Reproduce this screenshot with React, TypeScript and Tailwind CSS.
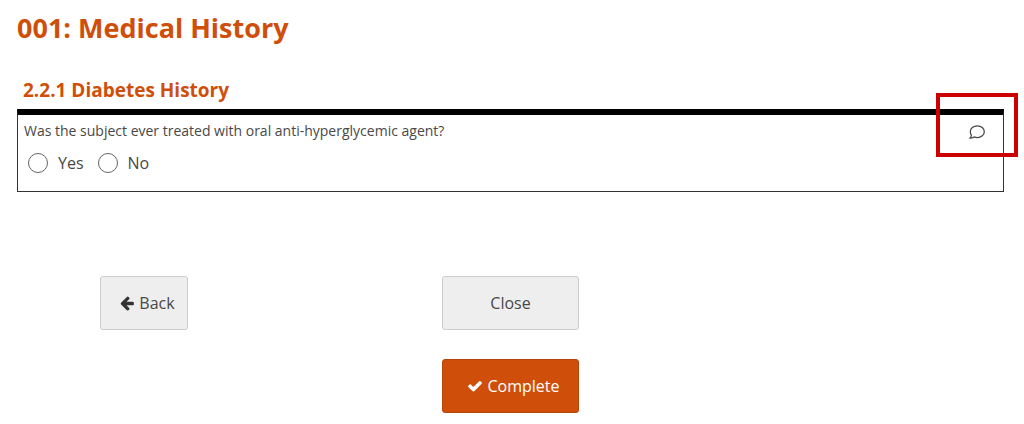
type IconProps = { className?: string };

const ArrowLeft = ({ className }: IconProps) => (
  <svg viewBox="0 0 1792 1792" fill="currentColor" className={className} aria-hidden="true">
    <path d="M1664 896v128q0 53-32.5 90.5t-84.5 37.5h-704l293 294q38 36 38 90t-38 90l-75 76q-37 37-90 37-52 0-91-37l-651-652q-37-37-37-90 0-52 37-91l651-650q38-38 91-38 52 0 90 38l75 74q38 38 38 91t-38 91l-293 293h704q52 0 84.5 37.5t32.5 90.5z" />
  </svg>
);

const Check = ({ className }: IconProps) => (
  <svg viewBox="0 0 1792 1792" fill="currentColor" className={className} aria-hidden="true">
    <path d="M1671 566q0 40-28 68l-724 724-136 136q-28 28-68 28t-68-28l-136-136-362-362q-28-28-28-68t28-68l136-136q28-28 68-28t68 28l294 295 656-657q28-28 68-28t68 28l136 136q28 28 28 68z" />
  </svg>
);

const Comment = ({ className }: IconProps) => (
  <svg viewBox="0 0 16 16" fill="none" stroke="currentColor" strokeWidth="1.25" strokeLinejoin="round" className={className} aria-hidden="true">
    <path d="M8.3 1.9c4 0 7 2.6 7 5.8s-3 5.8-7 5.8c-1.2 0-2.3-.2-3.2-.6-1 .8-2.3 1.3-4.3 1.3 1-.9 1.5-1.9 1.6-3C1.700 10.200 1.300 9 1.300 7.700c0-3.200 3-5.800 7-5.800z" />
  </svg>
);

const options = ["Yes", "No"];

export default function App() {
  return (
    <main className="pt-2 pr-5 pl-[17px] font-['Open_Sans',sans-serif] text-base text-[#484848]">
      <h1 className="text-[27px] leading-10 font-bold text-[#cf4f0a]">001: Medical History</h1>
      <h2 className="mt-7 pl-1.5 text-[19px] leading-7 font-bold text-[#cf4f0a]">2.2.1 Diabetes History</h2>
      <section className="relative mt-[5px] border border-t-[6px] border-[#333] border-t-black px-1.5 pt-1 pb-4">
        <fieldset>
          <legend className="text-sm leading-6">Was the subject ever treated with oral anti-hyperglycemic agent?</legend>
          <div className="mt-2 ml-1 flex gap-3.5">
            {options.map((o) => (
              <label key={o} className="flex h-6 items-center gap-2.5">
                <input type="radio" name="treated" className="size-5 appearance-none rounded-full border border-[#666] bg-white checked:border-[6px]" />
                {o}
              </label>
            ))}
          </div>
        </fieldset>
        <div className="absolute -top-[22px] -right-[15px] flex h-16 w-[82px] items-center justify-center border-4 border-[#cc0000] pt-3.5">
          <button type="button" aria-label="Add comment">
            <Comment className="size-4" />
          </button>
        </div>
      </section>
      <div className="mt-[84px] ml-[83px] flex">
        <button type="button" className="flex h-[54px] w-[88px] items-center justify-center gap-1 rounded-[3px] border border-[#ccc] bg-[#eee] pl-1.5">
          <ArrowLeft className="size-4 text-[#333]" />
          Back
        </button>
        <div className="ml-[254px] flex w-[137px] flex-col gap-[29px]">
          <button type="button" className="h-[54px] rounded-[3px] border border-[#ccc] bg-[#eee]">Close</button>
          <button type="button" className="flex h-[54px] items-center justify-center gap-1 rounded-[3px] border border-[#b54508] bg-[#cf4f0a] pl-1.5 text-white">
            <Check className="size-4" />
            Complete
          </button>
        </div>
      </div>
    </main>
  );
}
